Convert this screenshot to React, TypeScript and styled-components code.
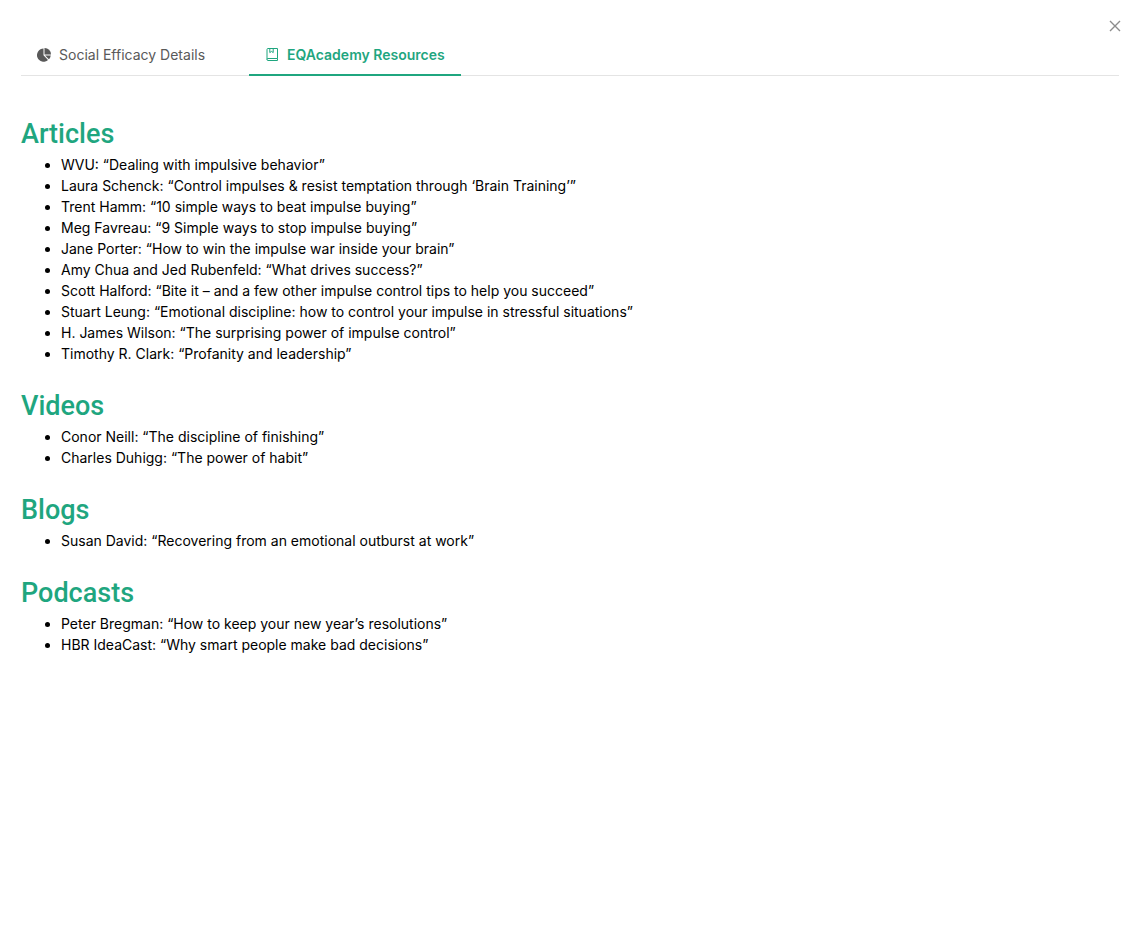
import React, { useState } from "react";
import styled, { createGlobalStyle } from "styled-components";

const green = "#1fa67f";

const GlobalStyle = createGlobalStyle`
  * { box-sizing: border-box; }
  body {
    margin: 0;
    background: #fff;
    color: #000;
    font-family: Inter, "Liberation Sans", sans-serif;
    font-size: 14px;
    line-height: 21px;
  }
`;

const Page = styled.main`
  padding: 16px 16px 24px 21px;
`;

const TopBar = styled.header`
  display: flex;
  justify-content: flex-end;
  height: 20px;
`;

const CloseButton = styled.button`
  display: flex;
  align-items: center;
  justify-content: center;
  width: 20px;
  height: 20px;
  margin-right: -6px;
  padding: 0;
  border: 0;
  background: none;
  color: #8c8c8c;
  cursor: pointer;
`;

const TabList = styled.div`
  display: flex;
  gap: 28px;
  height: 40px;
  border-bottom: 1px solid #e4e4e4;
`;

const Tab = styled.button<{ $active: boolean }>`
  display: flex;
  align-items: center;
  gap: 8px;
  height: 40px;
  padding: 0 16px 1px;
  border: 0;
  border-bottom: 2px solid ${(p) => (p.$active ? green : "transparent")};
  background: none;
  color: ${(p) => (p.$active ? green : "#595959")};
  font: inherit;
  font-weight: ${(p) => (p.$active ? 600 : 400)};
  white-space: nowrap;
  cursor: pointer;
`;

const Content = styled.div`
  display: flex;
  flex-direction: column;
  gap: 24px;
  padding-top: 40px;
`;

const Heading = styled.h1`
  margin: 0 0 2px;
  color: ${green};
  font-family: Roboto, "Liberation Sans", sans-serif;
  font-size: 27px;
  font-weight: 500;
  line-height: 36px;
`;

const List = styled.ul`
  margin: 0;
  padding: 0 0 0 40px;
`;

const PieIcon = () => (
  <svg width="14" height="14" viewBox="0 0 14 14" fill="currentColor" aria-hidden="true">
    <path d="M6.5 .5V7.3L11 12A6.6 6.6 0 1 1 6.5 .5Z" />
    <path d="M7.5 0A6.4 6.4 0 0 1 14 6.4H7.5Z" />
    <path d="M8.1 7.4H13.8A6.6 6.6 0 0 1 11.8 11.3Z" />
  </svg>
);

const BookIcon = () => (
  <svg width="14" height="14" viewBox="0 0 14 14" fill="none" stroke="currentColor" aria-hidden="true">
    <path d="M12.5 10.5V.5H3Q2 .5 2 1.5V11.5Q2 12.5 3 12.5H12.5V10.5H3Q2 10.5 2 11.5" />
    <path d="M4.8 .5V4.6L6.5 3.4L8.2 4.6V.5" />
  </svg>
);

const CloseIcon = () => (
  <svg width="12" height="12" viewBox="0 0 12 12" fill="none" stroke="currentColor" strokeWidth="1.4" aria-hidden="true">
    <path d="M1 1L11 11M11 1L1 11" />
  </svg>
);

const tabs = [
  { label: "Social Efficacy Details", Icon: PieIcon },
  { label: "EQAcademy Resources", Icon: BookIcon },
];

const sections = [
  {
    title: "Articles",
    items: [
      "WVU: “Dealing with impulsive behavior”",
      "Laura Schenck: “Control impulses & resist temptation through ‘Brain Training’”",
      "Trent Hamm: “10 simple ways to beat impulse buying”",
      "Meg Favreau: “9 Simple ways to stop impulse buying”",
      "Jane Porter: “How to win the impulse war inside your brain”",
      "Amy Chua and Jed Rubenfeld: “What drives success?”",
      "Scott Halford: “Bite it – and a few other impulse control tips to help you succeed”",
      "Stuart Leung: “Emotional discipline: how to control your impulse in stressful situations”",
      "H. James Wilson: “The surprising power of impulse control”",
      "Timothy R. Clark: “Profanity and leadership”",
    ],
  },
  {
    title: "Videos",
    items: [
      "Conor Neill: “The discipline of finishing”",
      "Charles Duhigg: “The power of habit”",
    ],
  },
  { title: "Blogs", items: ["Susan David: “Recovering from an emotional outburst at work”"] },
  {
    title: "Podcasts",
    items: [
      "Peter Bregman: “How to keep your new year’s resolutions”",
      "HBR IdeaCast: “Why smart people make bad decisions”",
    ],
  },
];

export default function App() {
  const [active, setActive] = useState(1);
  return (
    <Page>
      <GlobalStyle />
      <TopBar>
        <CloseButton type="button" aria-label="Close">
          <CloseIcon />
        </CloseButton>
      </TopBar>
      <TabList role="tablist">
        {tabs.map(({ label, Icon }, i) => (
          <Tab
            key={label}
            type="button"
            role="tab"
            aria-selected={i === active}
            $active={i === active}
            onClick={() => setActive(i)}
          >
            <Icon />
            {label}
          </Tab>
        ))}
      </TabList>
      <Content role="tabpanel">
        {sections.map((section) => (
          <section key={section.title}>
            <Heading>{section.title}</Heading>
            <List>
              {section.items.map((item) => (
                <li key={item}>{item}</li>
              ))}
            </List>
          </section>
        ))}
      </Content>
    </Page>
  );
}
